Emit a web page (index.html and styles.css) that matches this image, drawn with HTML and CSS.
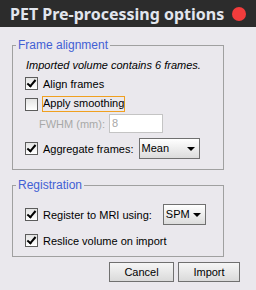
FILE: index.html
```html
<!DOCTYPE html>
<html lang="en">
<head>
    <meta charset="UTF-8">
    <title>PET Pre-processing options</title>
    <link rel="stylesheet" href="styles.css">
</head>
<body>
    <header class="titlebar">
        <span class="title">PET Pre-processing options</span>
        <span class="close-dot"></span>
    </header>
    <main class="dialog">
        <fieldset class="group group-frames">
            <legend>Frame alignment</legend>
            <div class="note">Imported volume contains 6 frames.</div>
            <div class="row row-align"><span class="check on"></span>Align frames</div>
            <div class="row row-smooth"><span class="check"></span><span class="focus">Apply smoothing</span></div>
            <div class="row row-fwhm">
                <span class="muted">FWHM (mm):</span>
                <span class="field">8</span>
            </div>
            <div class="row row-agg">
                <span class="check on"></span>Aggregate frames:
                <span class="combo combo-mean">Mean<span class="arrow"></span></span>
            </div>
        </fieldset>

        <fieldset class="group group-reg">
            <legend>Registration</legend>
            <div class="row row-mri">
                <span class="check on"></span>Register to MRI using:
                <span class="combo combo-spm">SPM<span class="arrow"></span></span>
            </div>
            <div class="row row-reslice"><span class="check on"></span>Reslice volume on import</div>
        </fieldset>

        <div class="buttons">
            <button class="btn btn-cancel">Cancel</button>
            <button class="btn btn-import">Import</button>
        </div>
    </main>
</body>
</html>
```

FILE: styles.css
```css
body {
    margin: 0;
    width: 256px;
    height: 290px;
    background-color: #eae8ed;
    font-family: "Liberation Sans", Arial, sans-serif;
    font-size: 11px;
    color: #000;
    overflow: hidden;
}

.titlebar {
    height: 27px;
    background-color: #2c2c2c;
    display: flex;
    align-items: center;
    padding: 0 0 0 10px;
}

.title {
    font-family: "Noto Sans", sans-serif;
    font-weight: bold;
    font-size: 16px;
    color: #e2e6ee;
}

.close-dot {
    width: 14px;
    height: 14px;
    border-radius: 50%;
    background-color: #f23c3c;
    margin-left: 8px;
}

.dialog {
    padding: 11px 0 0 12px;
}

.group {
    width: 198px;
    margin: 0;
    padding: 0 0 0 12px;
    border: 1px solid #a0a0a0;
}

.group legend {
    color: #4260d4;
    font-size: 12px;
    padding: 0 2px;
    margin-left: -9px;
    line-height: 15px;
}

.group-frames {
    padding-bottom: 10px;
}

.group-reg {
    margin-top: 8px;
    padding-bottom: 5px;
}

.note {
    font-style: italic;
    height: 16px;
    line-height: 16px;
    margin-top: 4px;
    padding-left: 1px;
}

.row {
    display: flex;
    align-items: center;
}

.row-align { height: 21px; }
.row-smooth { height: 20px; }
.row-fwhm { height: 19px; padding-left: 14px; }
.row-agg { height: 21px; margin-top: 5px; }
.row-mri { height: 21px; margin-top: 11px; }
.row-reslice { height: 21px; margin-top: 5px; }

.check {
    width: 11px;
    height: 11px;
    border: 1px solid #5c5c5c;
    background: linear-gradient(#e4e4e4, #ffffff);
    margin-right: 5px;
    flex: none;
    position: relative;
}

.check.on::after {
    content: "";
    position: absolute;
    left: 3px;
    top: 0;
    width: 3px;
    height: 7px;
    border: solid #000;
    border-width: 0 2px 2px 0;
    transform: rotate(40deg);
}

.focus {
    border: 1px solid #f0a020;
    padding: 0 0 1px 0;
    margin-left: -1px;
    line-height: 13px;
}

.muted {
    color: #a8a8a8;
}

.field {
    width: 50px;
    height: 17px;
    margin-left: 4px;
    border: 1px solid #c4c4c4;
    background-color: #fff;
    color: #a8a8a8;
    line-height: 17px;
    padding-left: 2px;
}

.combo {
    height: 19px;
    border: 1px solid #707070;
    background: linear-gradient(#ffffff, #dcdcdc);
    line-height: 19px;
    padding-left: 2px;
    display: flex;
    justify-content: space-between;
    align-items: center;
    box-sizing: content-box;
}

.combo-mean {
    width: 57px;
    margin-left: 5px;
}

.combo-spm {
    width: 39px;
    margin-left: 11px;
}

.arrow {
    width: 0;
    height: 0;
    border-left: 4px solid transparent;
    border-right: 4px solid transparent;
    border-top: 4px solid #000;
    margin-right: 4px;
}

.buttons {
    display: flex;
    gap: 4px;
    margin: 5px 0 0 97px;
}

.btn {
    height: 20px;
    border: 1px solid #707070;
    background: linear-gradient(#f6f6f6, #dadada);
    font-family: "Liberation Sans", Arial, sans-serif;
    font-size: 11px;
    padding: 0;
}

.btn-cancel { width: 65px; }
.btn-import { width: 62px; }
```
